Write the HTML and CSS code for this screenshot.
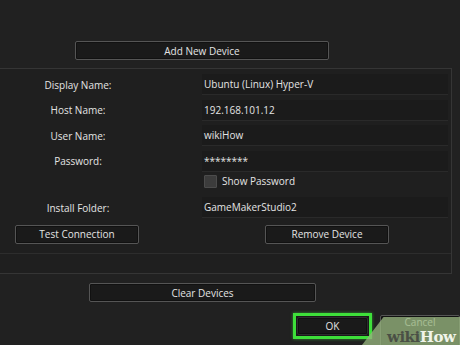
FILE: index.html
```html
<!DOCTYPE html>
<html lang="en">
<head>
  <meta charset="UTF-8" />
  <title>Remote Devices</title>
  <link rel="stylesheet" href="styles.css">
</head>
<body>

  <div class="top">
    <button class="btn btn-add">Add New Device</button>
  </div>

  <div class="panel">
    <div class="row">
      <span class="label">Display Name:</span>
      <div class="field">Ubuntu (Linux) Hyper-V</div>
    </div>
    <div class="row">
      <span class="label">Host Name:</span>
      <div class="field">192.168.101.12</div>
    </div>
    <div class="row">
      <span class="label">User Name:</span>
      <div class="field">wikiHow</div>
    </div>
    <div class="row">
      <span class="label">Password:</span>
      <div class="field">********</div>
    </div>
    <div class="row row-check">
      <span class="label"></span>
      <label class="check"><span class="box"></span>Show Password</label>
    </div>
    <div class="row row-folder">
      <span class="label">Install Folder:</span>
      <div class="field">GameMakerStudio2</div>
    </div>
    <div class="actions">
      <button class="btn btn-test">Test Connection</button>
      <button class="btn btn-remove">Remove Device</button>
    </div>
    <div class="panel-foot"></div>
  </div>

  <div class="clear-row">
    <button class="btn btn-clear">Clear Devices</button>
  </div>

  <div class="dialog-buttons">
    <div class="ok-wrap"><button class="btn btn-ok">OK</button></div>
    <button class="btn btn-cancel">Cancel</button>
  </div>

  <div class="watermark"><span class="wm-wiki">wiki</span><span class="wm-how">How</span></div>

</body>
</html>
```

FILE: styles.css
```css
:root {
  --bg: #212121;
  --field-bg: #1b1b1b;
  --btn-bg: #1a1a1a;
  --btn-border: #555;
  --line: #353535;
  --text: #e4e4e4;
  --green: #3ee03a;
}

html, body {
  margin: 0;
  height: 100%;
  overflow: hidden;
}

body {
  font-family: "Open Sans", "DejaVu Sans", sans-serif;
  font-size: 10px;
  background-color: var(--bg);
  color: var(--text);
  position: relative;
}

.btn {
  font-family: inherit;
  font-size: 10px;
  color: var(--text);
  background-color: var(--btn-bg);
  border: 1px solid var(--btn-border);
  border-radius: 2px;
  padding: 0;
  height: 19px;
  line-height: 16px;
  box-shadow: inset 0 0 0 1px #111;
}

.top {
  padding: 41px 0 0 75px;
  height: 27px;
}

.btn-add {
  width: 254px;
}

.panel {
  width: 452px;
  height: 206px;
  box-sizing: border-box;
  border: 1px solid var(--line);
  border-left: none;
  background-color: #1f1f1f;
  padding-top: 3px;
}

.row {
  display: flex;
  align-items: center;
  height: 25.5px;
}

.label {
  width: 156px;
  text-align: center;
  flex-shrink: 0;
}

.field {
  margin-left: 46px;
  width: 246px;
  height: 21px;
  line-height: 21px;
  padding-left: 2px;
  background-color: var(--field-bg);
  border-bottom: 1px solid #2a2a2a;
  box-sizing: border-box;
}

.row-check {
  height: 14px;
}

.row-folder {
  margin-top: 7px;
}

.check {
  margin-left: 48px;
  display: flex;
  align-items: center;
  gap: 5px;
}

.box {
  width: 11px;
  height: 11px;
  background-color: #3c3c3c;
  border: 1px solid #4c4c4c;
  border-radius: 1px;
}

.actions {
  display: flex;
  padding: 4px 0 0 15px;
  height: 21px;
}

.btn-test,
.btn-remove {
  width: 124px;
}

.btn-remove {
  margin-left: 126px;
}

.panel-foot {
  margin-top: 7px;
  border-top: 1px solid #2d2d2d;
}

.clear-row {
  padding: 9px 0 0 89px;
}

.btn-clear {
  width: 227px;
}

.dialog-buttons {
  display: flex;
  align-items: flex-start;
  padding: 11px 0 0 293px;
  gap: 8px;
}

.ok-wrap {
  border: 3px solid var(--green);
  padding: 1px;
  background-color: #1a1a1a;
  box-shadow: 0 0 3px rgba(62, 224, 58, 0.6);
}

.btn-ok {
  width: 71px;
  height: 18px;
  display: block;
  border-color: #2e2e2e;
}

.btn-cancel {
  width: 80px;
  height: 32px;
  margin-top: 2px;
  line-height: 11px;
  padding-bottom: 18px;
}

.watermark {
  position: absolute;
  left: 362px;
  top: 317px;
  width: 98px;
  height: 28px;
  background-color: rgba(150, 180, 125, 0.78);
  clip-path: polygon(22% 0, 100% 0, 100% 100%, 0 100%);
  font-family: "DejaVu Serif", serif;
  font-weight: bold;
  font-size: 15px;
  line-height: 13px;
  padding: 14px 0 0 25px;
  box-sizing: border-box;
  letter-spacing: -0.5px;
}

.wm-wiki {
  color: #4a4f45;
}

.wm-how {
  color: #f0f4ea;
}
```
